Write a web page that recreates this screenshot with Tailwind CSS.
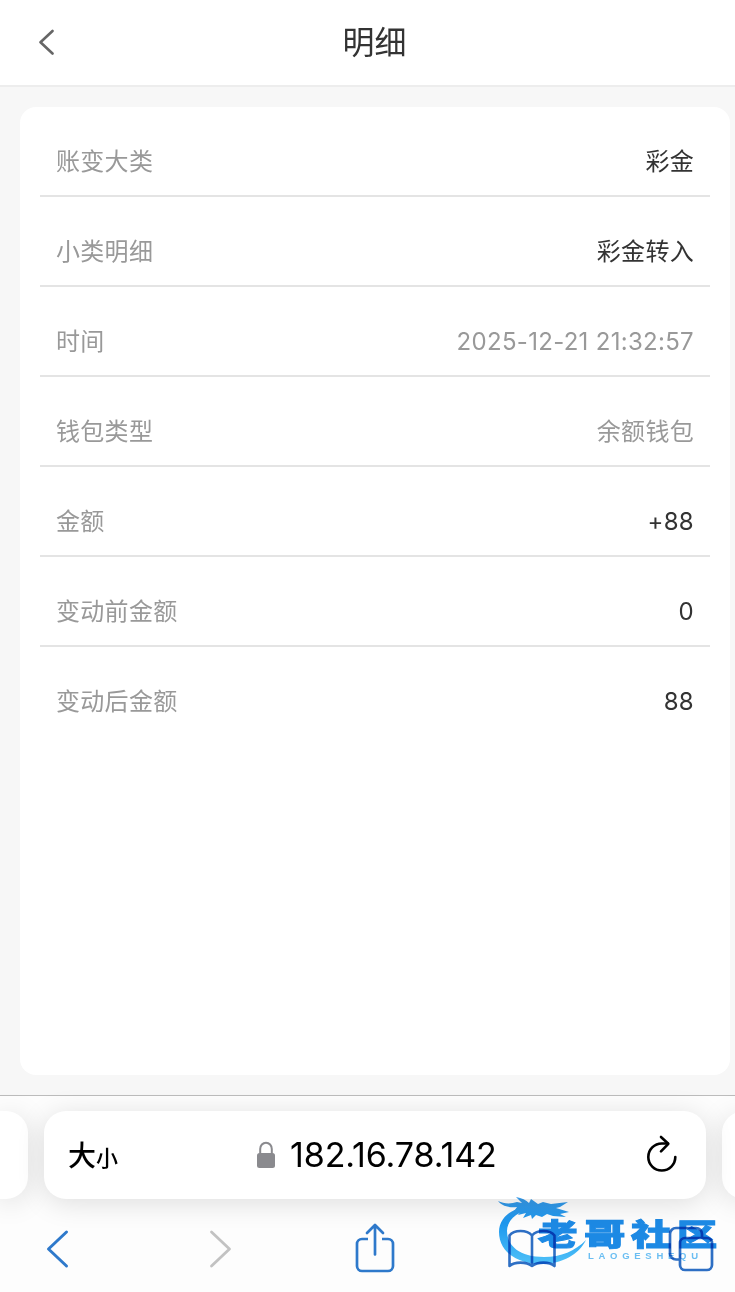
<!DOCTYPE html>
<html lang="zh-CN">

<head>
  <meta charset="UTF-8">
  <meta name="viewport" content="width=device-width, initial-scale=1.0">
  <title>明细</title>
  <script src="https://cdn.jsdelivr.net/npm/@tailwindcss/browser@4"></script>
</head>

<body class="bg-[#f7f7f7] font-['Inter','Noto_Sans_CJK_SC',sans-serif] text-[#333]">
  <div class="relative flex flex-col w-[735px] h-[1292px] overflow-hidden">
    <!-- Header -->
    <header class="flex items-center h-[87px] shrink-0 bg-white border-b-2 border-[#ededed] pl-[38px] pr-[38px]">
      <svg class="w-4 h-7 -mt-0.5" viewBox="0 0 16 28" fill="none" stroke="#666" stroke-width="2.6" stroke-linecap="round" stroke-linejoin="round">
        <path d="M14.5 3 2.500 14.2 14.5 25.5" />
      </svg>
      <h1 class="flex-1 text-center text-[32px] leading-none pl-[2px] pr-[4px]">明细</h1>
    </header>

    <!-- Detail -->
    <main class="flex h-[1008px] shrink-0 pt-5 pb-5 pl-5 pr-[5px]">
      <div class="flex-1 bg-white rounded-2xl px-5 text-2xl leading-9 tracking-[0.3px]">
        <div class="flex justify-between items-end h-[90px] px-4 pb-[15px] border-b-2 border-[#e4e4e4]"><span class="text-[#999]">账变大类</span><span>彩金</span></div>
        <div class="flex justify-between items-end h-[90px] px-4 pb-[15px] border-b-2 border-[#e4e4e4]"><span class="text-[#999]">小类明细</span><span>彩金转入</span></div>
        <div class="flex justify-between items-end h-[90px] px-4 pb-[15px] border-b-2 border-[#e4e4e4]"><span class="text-[#999]">时间</span><span class="text-[#999]">2025-12-21 21:32:57</span></div>
        <div class="flex justify-between items-end h-[90px] px-4 pb-[15px] border-b-2 border-[#e4e4e4]"><span class="text-[#999]">钱包类型</span><span class="text-[#999]">余额钱包</span></div>
        <div class="flex justify-between items-end h-[90px] px-4 pb-[15px] border-b-2 border-[#e4e4e4]"><span class="text-[#999]">金额</span><span>+88</span></div>
        <div class="flex justify-between items-end h-[90px] px-4 pb-[15px] border-b-2 border-[#e4e4e4]"><span class="text-[#999]">变动前金额</span><span>0</span></div>
        <div class="flex justify-between items-end h-[90px] px-4 pb-[17px]"><span class="text-[#999]">变动后金额</span><span>88</span></div>
      </div>
    </main>

    <!-- Browser bar -->
    <footer class="relative flex-1 bg-[#fdfdfd] border-t border-[#bcbcbc] pt-[15px]">
      <div class="flex gap-4 h-[88px]">
        <div class="w-7 shrink-0 rounded-r-[22px] bg-white shadow-[0_4px_28px_rgba(0,0,0,0.13)]"></div>
        <div class="relative flex items-center w-[662px] shrink-0 rounded-[22px] bg-white shadow-[0_4px_28px_rgba(0,0,0,0.13)] px-6 text-black">
          <div class="flex items-baseline w-[188px] mt-0.5 font-medium leading-none"><span class="text-[28px]">大</span><span class="text-[22px]">小</span></div>
          <svg class="w-[20px] h-[28px]" viewBox="0 0 20 28">
            <path d="M4.2 12V8a5.8 6.3 0 0 1 11.6 0v4" fill="none" stroke="#8a8a8e" stroke-width="2" />
            <rect x="1" y="12" width="18" height="15" rx="2.5" fill="#8a8a8e" />
          </svg>
          <span class="ml-[14px] text-[34px] leading-none tracking-[-0.1px]">182.16.78.142</span>
          <svg class="ml-auto mr-[2px] w-[36px] h-[40px]" viewBox="0 0 36 40" fill="none" stroke="#000" stroke-width="2.6" stroke-linecap="round" stroke-linejoin="round">
            <path d="M31.3 22A13.5 13.5 0 1 1 17.8 8.5h6" />
            <path d="M17 2l7.3 6.8L17 16.4" />
          </svg>
        </div>
        <div class="w-7 shrink-0 rounded-l-[22px] bg-white shadow-[0_4px_28px_rgba(0,0,0,0.13)]"></div>
      </div>
      <div class="flex items-center h-[100px] pl-[46px]">
        <svg class="w-6 h-10" viewBox="0 0 24 40" fill="none" stroke="#2e79cb" stroke-width="3" stroke-linecap="round" stroke-linejoin="round">
          <path d="M20.5 3 2.5 20l18 17" />
        </svg>
        <svg class="ml-[138px] w-6 h-10" viewBox="0 0 24 40" fill="none" stroke="#c2c2c2" stroke-width="2.8" stroke-linecap="round" stroke-linejoin="round">
          <path d="M3.5 3l18 17-18 17" />
        </svg>
        <svg class="ml-[123px] -mt-0.5 w-10 h-[50px]" viewBox="0 0 40 50" fill="none" stroke="#2e79cb" stroke-width="2.7" stroke-linecap="round" stroke-linejoin="round">
          <path d="M13 16H7a5 5 0 0 0-5 5v22a5 5 0 0 0 5 5h26a5 5 0 0 0 5-5V21a5 5 0 0 0-5-5h-6" stroke-linecap="butt" />
          <path d="M20 31.500V2.500M12 10l8-8 8 8" />
        </svg>
        <svg class="ml-[112px] w-[50px] h-10" viewBox="0 0 50 40" fill="none" stroke="#2e6fc4" stroke-width="2.6" stroke-linecap="round" stroke-linejoin="round">
          <path d="M25 6.500C20 .5 7 .5 2.500 6.500V37c5-4.500 17-4.500 22.500 0 5.500-4.500 17.500-4.500 22.500 0V6.500C43 .5 30 .5 25 6.500V37" />
        </svg>
        <svg class="ml-[111px] w-[46px] h-[46px]" viewBox="0 0 46 46" fill="none" stroke="#2e6fc4" stroke-width="2.700" stroke-linejoin="round">
          <path d="M12 33.500H8a6 6 0 0 1-6-6V8a6 6 0 0 1 6-6h20a6 6 0 0 1 6 6v4" />
          <rect x="12" y="12" width="32" height="32" rx="5" />
        </svg>
      </div>
    </footer>

    <!-- Community watermark, lies over the toolbar -->
    <svg class="absolute left-[490px] top-[1190px] w-[240px] h-[80px] mix-blend-multiply blur-[0.7px]" viewBox="0 0 240 80">
      <defs>
        <linearGradient id="wm" gradientUnits="userSpaceOnUse" x1="0" y1="5" x2="0" y2="75">
          <stop offset="0" stop-color="#3a9ae8" />
          <stop offset=".4" stop-color="#1c98f0" />
          <stop offset="1" stop-color="#50c4fa" />
        </linearGradient>
        <linearGradient id="wt" gradientUnits="userSpaceOnUse" x1="0" y1="28" x2="0" y2="60">
          <stop offset="0" stop-color="#1c8ae6" />
          <stop offset="1" stop-color="#30b8fc" />
        </linearGradient>
      </defs>
      <g fill="url(#wm)">
        <path d="M38 17C20 18 9 29 9 42c0 19 17 32 42 32 22 0 38-10 45-24-11 11-25 17-42 17-24 0-37-11-37-26 0-10 8-18 23-22z" />
        <path d="M8 11C14 14 21 14 27 12L32 13 26 7C32 8 36 10 39 13L41 9 48 14 53 12 61 14 78 12 70 17 66 18 79 22 70 24 76 27 63 26 57 24 52 27 46 25 42 29 41 25 33 28 36 23 28 25 31 21 22 24 27 17C19 18 12 16 8 11z" />
      </g>
      <g fill="url(#wt)" stroke="url(#wt)" stroke-width="1" font-family="'Noto Sans CJK SC', sans-serif" font-weight="900" font-size="30">
        <text transform="translate(48 55) scale(1.32 1)">老</text>
        <text transform="translate(94 55) scale(1.38 1)">哥</text>
        <text transform="translate(141 55) scale(1.34 1)">社</text>
        <text transform="translate(187 55) scale(1.34 1)">区</text>
      </g>
      <text x="98" y="68.500" textLength="110" font-family="'Liberation Sans', sans-serif" font-size="9.500" font-weight="bold" fill="#6cc0f4">LAOGESHEQU</text>
    </svg>
  </div>
</body>

</html>
